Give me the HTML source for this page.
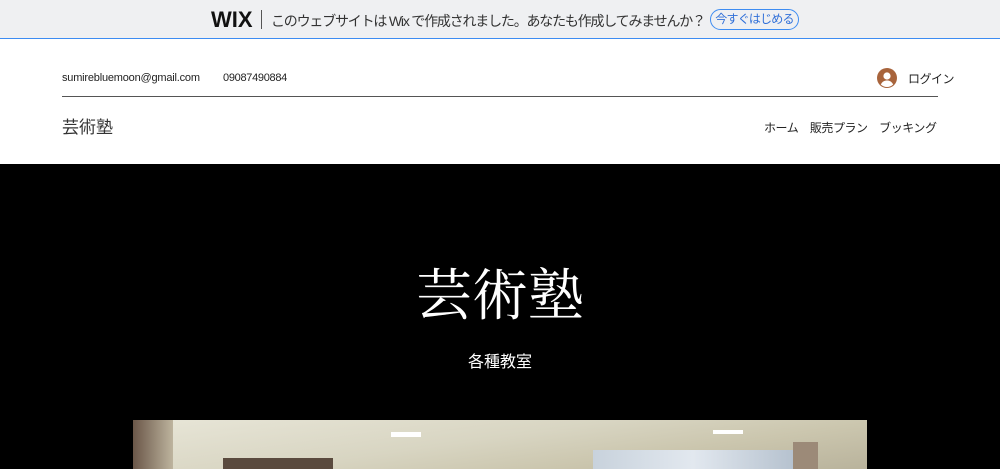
<!DOCTYPE html>
<html><head><meta charset="utf-8"><style>
*{margin:0;padding:0;box-sizing:border-box}
body{width:1000px;height:469px;overflow:hidden;background:#fff;font-family:"Liberation Sans","Noto Sans CJK JP",sans-serif;position:relative}
.bar{position:absolute;left:0;top:0;width:1000px;height:39px;background:#eff0f2;border-bottom:1px solid #3d8cf2}
.abs{position:absolute;white-space:nowrap}
</style></head><body>
<div class="bar">
 <div class="abs" style="left:211px;top:7px;font-size:22px;font-weight:bold;color:#111">WIX</div>
 <div class="abs" style="left:261px;top:10px;width:1px;height:19px;background:#555"></div>
 <div class="abs" style="left:271px;top:11px;font-size:14px;color:#333;letter-spacing:-1.2px">このウェブサイトは Wix で作成されました。あなたも作成してみませんか？</div>
 <div class="abs" style="left:710px;top:9px;width:89px;height:21px;border:1px solid #3d8cf2;border-radius:11px;font-size:12px;color:#2f6fd8;text-align:center;line-height:19px;letter-spacing:-0.8px">今すぐはじめる</div>
</div>
<div class="abs" style="left:62px;top:72px;font-size:11px;color:#222;letter-spacing:-0.2px">sumirebluemoon@gmail.com</div>
<div class="abs" style="left:223px;top:72px;font-size:11px;color:#222;letter-spacing:-0.3px">09087490884</div>
<svg class="abs" style="left:877px;top:68px" width="20" height="20" viewBox="0 0 20 20"><circle cx="10" cy="10" r="10" fill="#a8643c"/><circle cx="10" cy="8" r="3.6" fill="#fff"/><path d="M3.8 16.5c1.5-3 3.6-4 6.2-4s4.7 1 6.2 4A9 9 0 0 1 3.8 16.5z" fill="#fff"/></svg>
<div class="abs" style="left:908px;top:70px;font-size:12px;color:#222;letter-spacing:-0.5px">ログイン</div>
<div class="abs" style="left:62px;top:96px;width:876px;height:1px;background:#555"></div>
<div class="abs" style="left:62px;top:113px;font-size:17px;color:#333">芸術塾</div>
<div class="abs" style="left:764px;top:119px;font-size:12px;color:#222;letter-spacing:-0.45px">ホーム　販売プラン　ブッキング</div>
<div class="abs" style="left:0;top:164px;width:1000px;height:305px;background:#000"></div>
<div class="abs" style="left:0;top:252px;width:1000px;text-align:center;font-family:'Liberation Serif','Noto Serif CJK SC',serif;font-size:56px;color:#fff">芸術塾</div>
<div class="abs" style="left:0;top:348px;width:1000px;text-align:center;font-size:16px;color:#fff">各種教室</div>
<div class="abs" style="left:133px;top:420px;width:734px;height:49px;background:linear-gradient(172deg,#e8e6d8 0%,#d8d5c2 45%,#cbc6ae 70%,#b9b39c 100%)">
 <div class="abs" style="left:0;top:0;width:40px;height:49px;background:linear-gradient(90deg,#6a5648,#bdb49e)"></div>
 <div class="abs" style="left:460px;top:30px;width:200px;height:19px;background:linear-gradient(90deg,#c8d2dc,#e2e8ef,#b6c2cf)"></div>
 <div class="abs" style="left:660px;top:22px;width:25px;height:27px;background:#9c8a78"></div>
 <div class="abs" style="left:90px;top:38px;width:110px;height:11px;background:#5a4a3e"></div>
 <div class="abs" style="left:258px;top:12px;width:30px;height:5px;background:#fff"></div>
 <div class="abs" style="left:580px;top:10px;width:30px;height:4px;background:#fff"></div>
</div>
</body></html>
